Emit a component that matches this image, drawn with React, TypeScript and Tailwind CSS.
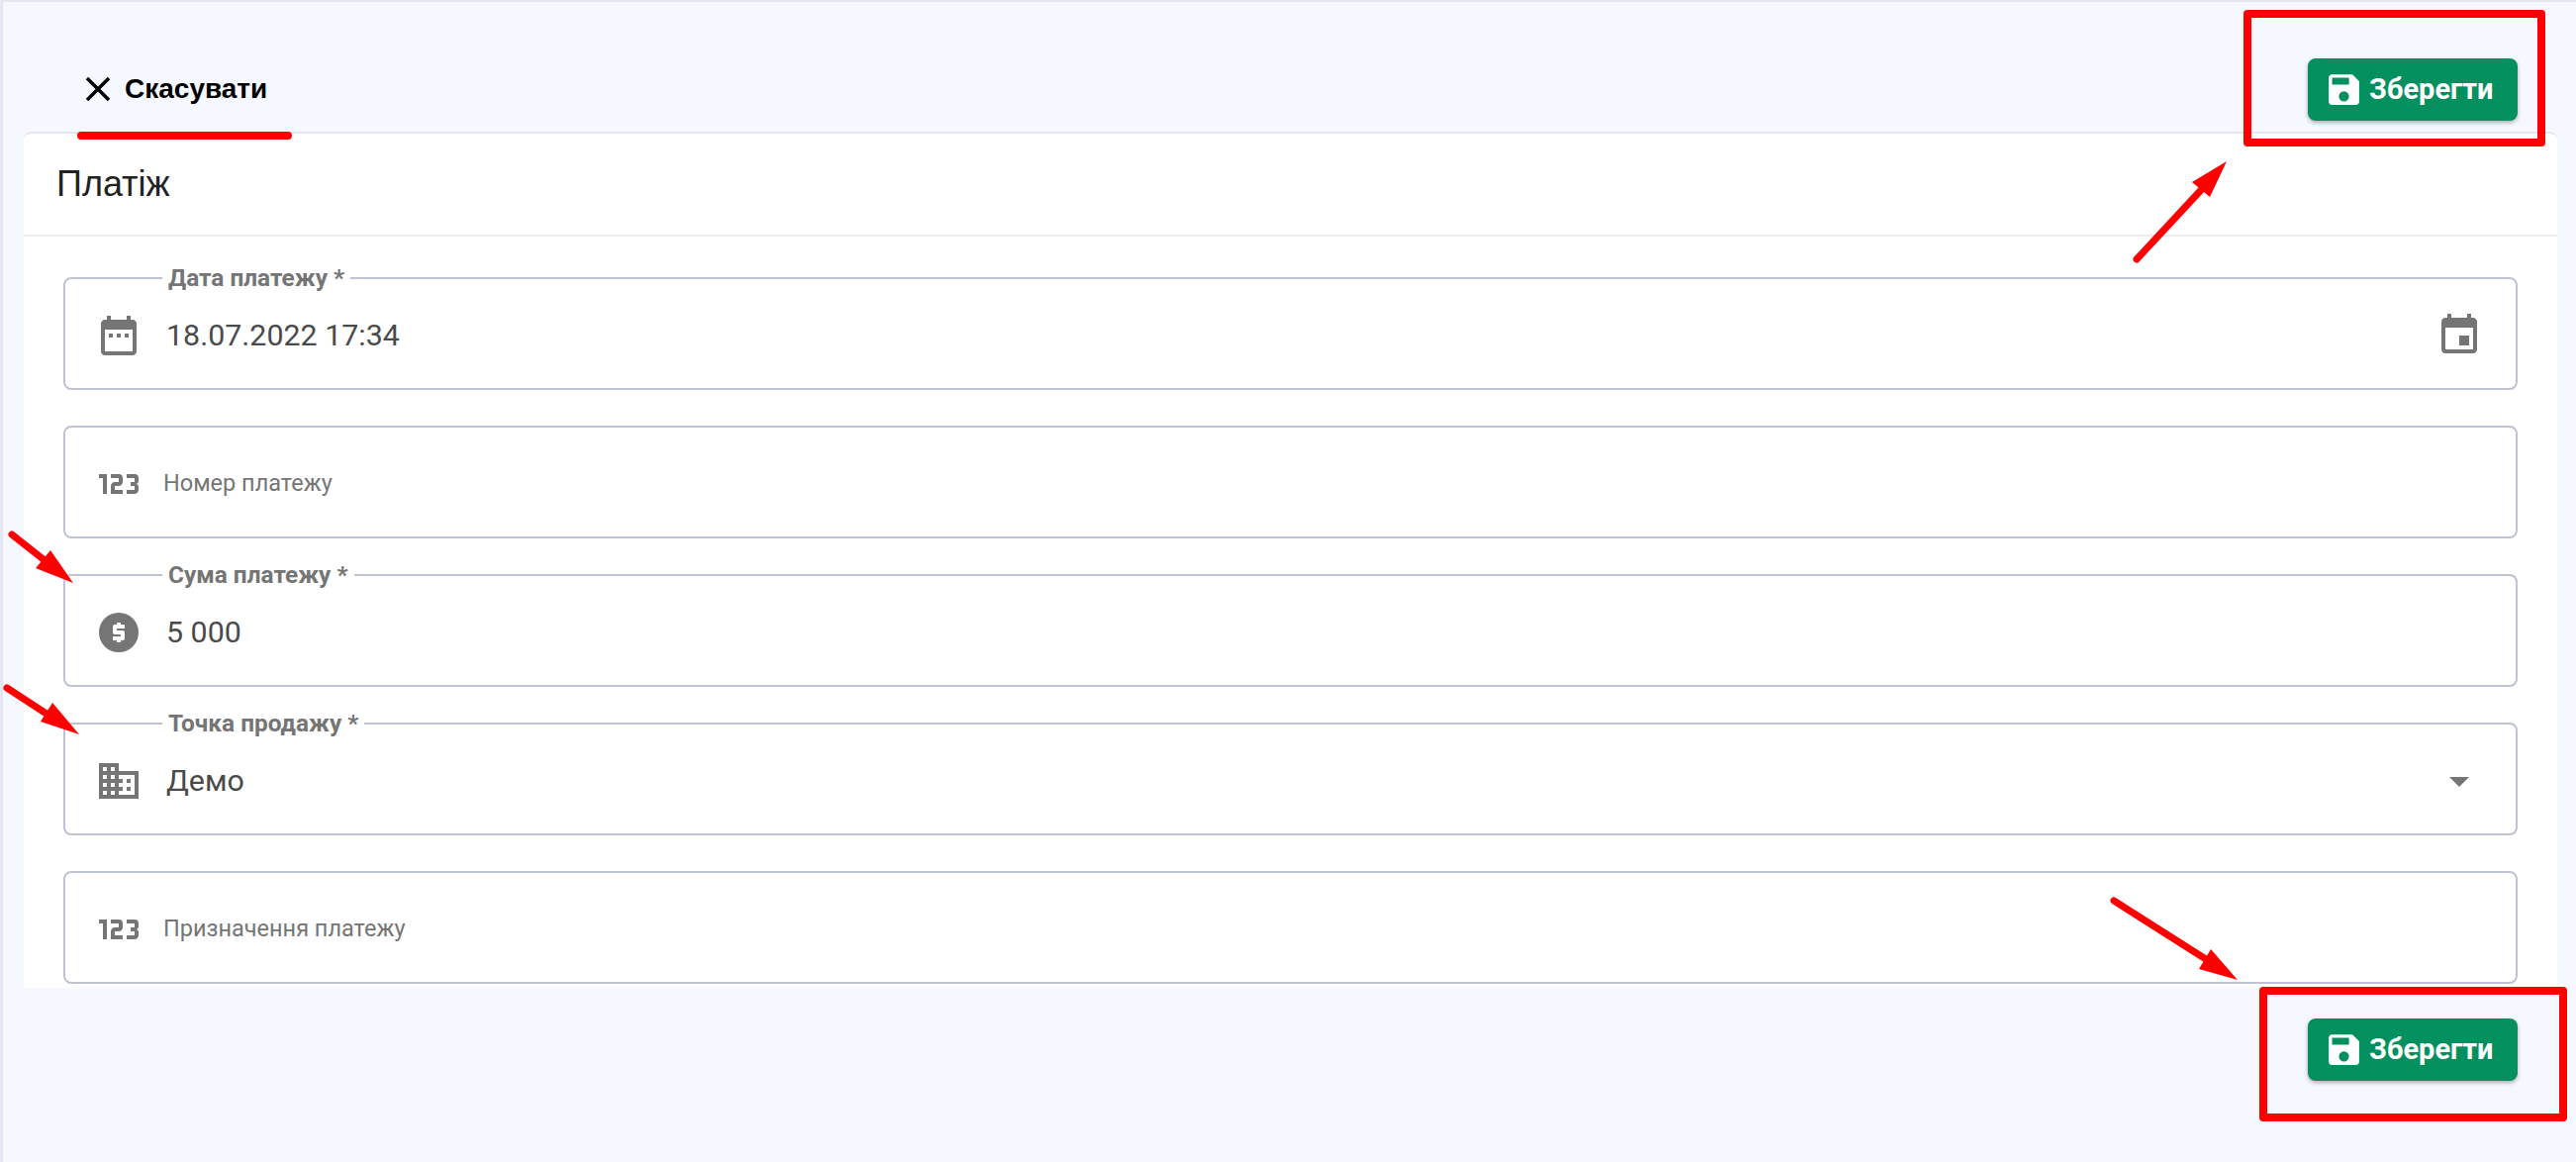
import React from 'react';

const paths = {
  close: 'M19 6.41L17.59 5 12 10.59 6.41 5 5 6.41 10.59 12 5 17.59 6.41 19 12 13.41 17.59 19 19 17.59 13.41 12z',
  save: 'M15,9H5V5H15M12,19A3,3 0 0,1 9,16A3,3 0 0,1 12,13A3,3 0 0,1 15,16A3,3 0 0,1 12,19M17,3H5C3.89,3 3,3.9 3,5V19A2,2 0 0,0 5,21H19A2,2 0 0,0 21,19V7L17,3Z',
  dateRange: 'M9 11H7v2h2v-2zm4 0h-2v2h2v-2zm4 0h-2v2h2v-2zm2-7h-1V2h-2v2H8V2H6v2H5c-1.11 0-1.99.9-1.99 2L3 20c0 1.1.89 2 2 2h14c1.1 0 2-.9 2-2V6c0-1.1-.9-2-2-2zm0 16H5V9h14v11z',
  event: 'M17 12h-5v5h5v-5zM16 1v2H8V1H6v2H5c-1.11 0-1.99.9-1.99 2L3 19c0 1.1.89 2 2 2h14c1.1 0 2-.9 2-2V5c0-1.1-.9-2-2-2h-1V1h-2zm3 18H5V8h14v11z',
  numeric: 'M4,17V9H2V7H6V17H4M22,15C22,16.11 21.1,17 20,17H16V15H20V13H18V11H20V9H16V7H20A2,2 0 0,1 22,9V10.5A1.5,1.5 0 0,1 20.5,12A1.5,1.5 0 0,1 22,13.5V15M14,15V17H8V13C8,11.89 8.9,11 10,11H12V9H8V7H12A2,2 0 0,1 14,9V11C14,12.11 13.1,13 12,13H10V15H14Z',
  money: 'M12,2A10,10 0 0,0 2,12A10,10 0 0,0 12,22A10,10 0 0,0 22,12A10,10 0 0,0 12,2M11,17V16H9V14H13V13H10A1,1 0 0,1 9,12V9A1,1 0 0,1 10,8H11V7H13V8H15V10H11V11H14A1,1 0 0,1 15,12V15A1,1 0 0,1 14,16H13V17H11Z',
  domain: 'M12 7V3H2v18h20V7H12zM6 19H4v-2h2v2zm0-4H4v-2h2v2zm0-4H4V9h2v2zm0-4H4V5h2v2zm4 12H8v-2h2v2zm0-4H8v-2h2v2zm0-4H8V9h2v2zm0-4H8V5h2v2zm10 12h-8v-2h2v-2h-2v-2h2v-2h-2V9h8v10zm-2-8h-2v2h2v-2zm0 4h-2v2h2v-2z',
  arrowDown: 'M7 10l5 5 5-5z',
};

function Icon({ d, className }: { d: string; className: string }) {
  return (
    <svg viewBox="0 0 24 24" fill="currentColor" className={`shrink-0 ${className}`}>
      <path d={d} />
    </svg>
  );
}

function SaveButton() {
  return (
    <button className="flex h-[63px] w-[212px] items-center gap-[5px] rounded-lg bg-[#03905e] pl-[16px] text-[29px] font-bold text-white shadow-[0_2px_4px_rgba(0,0,0,0.3)]">
      <Icon d={paths.save} className="h-[41px] w-[41px]" />
      Зберегти
    </button>
  );
}

interface FieldProps {
  label?: string;
  icon: string;
  value?: string;
  placeholder?: string;
  endIcon?: React.ReactNode;
}

function Field({ label, icon, value, placeholder, endIcon }: FieldProps) {
  return (
    <fieldset className="h-[114px] rounded-lg border-2 border-[#bfc2d1]">
      {label && (
        <legend className="ml-[98px] px-[6px] text-[24.4px] font-bold leading-[0px] text-[#757575]">{label}</legend>
      )}
      <div className="flex h-[110px] items-center pl-[30px] pr-[33px] pt-[4px]">
        <Icon d={icon} className="h-[48px] w-[48px] text-[#757575]" />
        {value ? (
          <span className="ml-[24px] flex-1 text-[30.4px] text-[#4a4a4a]">{value}</span>
        ) : (
          <span className="ml-[21px] flex-1 text-[23.5px] text-[#757575]">{placeholder}</span>
        )}
        {endIcon}
      </div>
    </fieldset>
  );
}

function Annotations() {
  return (
    <svg className="pointer-events-none absolute -left-[3px] -top-[2px]" width="2603" height="1174" fill="none">
      <rect x="2271" y="14" width="297" height="130" stroke="#ff0000" strokeWidth="8" strokeLinejoin="round" />
      <rect x="2287" y="1001" width="303" height="128" stroke="#ff0000" strokeWidth="8" strokeLinejoin="round" />
      <line x1="82" y1="137" x2="291" y2="137" stroke="#ff0000" strokeWidth="8" strokeLinecap="round" />
      <g stroke="#ff0000" strokeWidth="7" strokeLinecap="round">
        <line x1="2159" y1="262" x2="2225" y2="191" />
        <line x1="2136" y1="910" x2="2232" y2="971" />
        <line x1="12" y1="540" x2="50" y2="570" />
        <line x1="7" y1="695" x2="56" y2="727" />
      </g>
      <g fill="#ff0000">
        <polygon points="2250,163 2215,184 2233,199" />
        <polygon points="2261,990 2222,979 2234,959" />
        <polygon points="74,589 36,574 51,556" />
        <polygon points="80,742 41,729 53,710" />
      </g>
    </svg>
  );
}

export default function App() {
  return (
    <div className="relative h-[1174px] overflow-hidden border-l-[3px] border-t-2 border-[#e4e7f1] bg-[#f5f8ff] font-['Roboto',sans-serif]">
      <div className="flex h-[131px] items-start justify-between pl-[21px] pr-[59px]">
        <button className="ml-[54px] mt-[67px] flex items-center gap-[6px] font-['Liberation_Sans',sans-serif] text-[28px] font-bold text-black">
          <Icon d={paths.close} className="h-[42px] w-[42px]" />
          Скасувати
        </button>
        <div className="mt-[57px]">
          <SaveButton />
        </div>
      </div>

      <div className="ml-[21px] mr-[19px] h-[865px] rounded-t-lg border-t-2 border-[#e4e7f1] bg-white">
        <div className="flex h-[104px] items-center border-b-2 border-[#eeeeee] pl-[33px]">
          <h2 className="font-['Liberation_Sans',sans-serif] text-[36px] font-normal text-[#222222]">Платіж</h2>
        </div>
        <div className="flex flex-col gap-[36px] px-[40px] pt-[41px]">
          <Field
            label="Дата платежу *"
            icon={paths.dateRange}
            value="18.07.2022 17:34"
            endIcon={<Icon d={paths.event} className="h-[48px] w-[48px] text-[#757575]" />}
          />
          <Field icon={paths.numeric} placeholder="Номер платежу" />
          <Field label="Сума платежу *" icon={paths.money} value="5 000" />
          <Field
            label="Точка продажу *"
            icon={paths.domain}
            value="Демо"
            endIcon={<Icon d={paths.arrowDown} className="h-[48px] w-[48px] text-[#757575]" />}
          />
          <Field icon={paths.numeric} placeholder="Призначення платежу" />
        </div>
      </div>

      <div className="flex justify-end pr-[59px] pt-[31px]">
        <SaveButton />
      </div>

      <Annotations />
    </div>
  );
}
